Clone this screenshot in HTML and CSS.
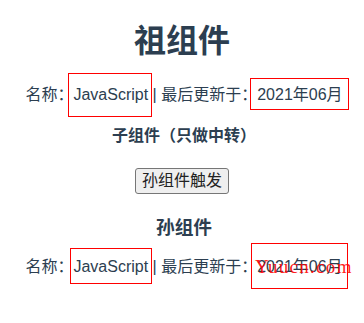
FILE: index.html
```html
<!DOCTYPE html>
<html lang="zh-CN">
<head>
<meta charset="utf-8">
<title>祖组件</title>
<link rel="stylesheet" href="styles.css">
</head>
<body>
<div class="app">
  <h1 class="title">祖组件</h1>
  <p class="info">名称：<span>JavaScript</span> | 最后更新于：<span>2021年06月</span></p>
  <div class="child">
    <h4 class="sub">子组件（只做中转）</h4>
    <button class="btn" type="button">孙组件触发</button>
    <div class="grandson">
      <h3 class="sub sub-g">孙组件</h3>
      <p class="info info-g">名称：<span>JavaScript</span> | 最后更新于：<span>2021年06月</span></p>
    </div>
  </div>
  <div class="mark mark-a"></div>
  <div class="mark mark-b"></div>
  <div class="mark mark-c"></div>
  <div class="mark mark-d"></div>
  <div class="watermark">Yuucn.com</div>
</div>
</body>
</html>
```
FILE: styles.css
```css
html, body {
  margin: 0;
  padding: 0;
  background: #ffffff;
}
.app {
  position: relative;
  display: flow-root;
  width: 364px;
  height: 323px;
  overflow: hidden;
  box-sizing: border-box;
  padding: 0 8px;
  text-align: center;
  color: #2c3e50;
  font-family: "Liberation Sans", Arial, "Noto Sans CJK SC", sans-serif;
}
.title {
  margin: 21px 0 0;
  font-size: 32px;
  line-height: 40px;
  font-weight: bold;
}
.info {
  margin: 24px 0 0;
  padding-left: 4px;
  font-size: 16px;
  line-height: 20px;
}
.sub {
  margin: 19px 0 0;
  padding-left: 4px;
  font-size: 16px;
  line-height: 24px;
  font-weight: bold;
}
.btn {
  margin-top: 20px;
  height: 26px;
  padding: 0 6px;
  font-family: "Liberation Sans", Arial, "Noto Sans CJK SC", sans-serif;
  font-size: 16px;
  line-height: 22px;
  color: #222;
  background: #efefef;
  border: 1px solid #767676;
  border-radius: 3px;
  vertical-align: top;
}
.child {
  display: flex;
  flex-direction: column;
  align-items: center;
}
.grandson {
  width: 100%;
}
.sub-g {
  margin-top: 22px;
  font-size: 18.72px;
}
.info-g {
  margin-top: 17px;
}
.mark {
  position: absolute;
  box-sizing: border-box;
  border: 1px solid #ff0000;
}
.mark-a { left: 68px; top: 73px; width: 84px; height: 44px; }
.mark-b { left: 250px; top: 78px; width: 99px; height: 32px; }
.mark-c { left: 70px; top: 248px; width: 82px; height: 36px; }
.mark-d { left: 251px; top: 243px; width: 97px; height: 46px; }
.watermark {
  position: absolute;
  left: 255px;
  top: 257px;
  font-family: "Liberation Serif", "Times New Roman", serif;
  font-size: 19px;
  letter-spacing: 1.3px;
  line-height: 20px;
  color: rgba(255, 0, 0, 0.9);
}
```
